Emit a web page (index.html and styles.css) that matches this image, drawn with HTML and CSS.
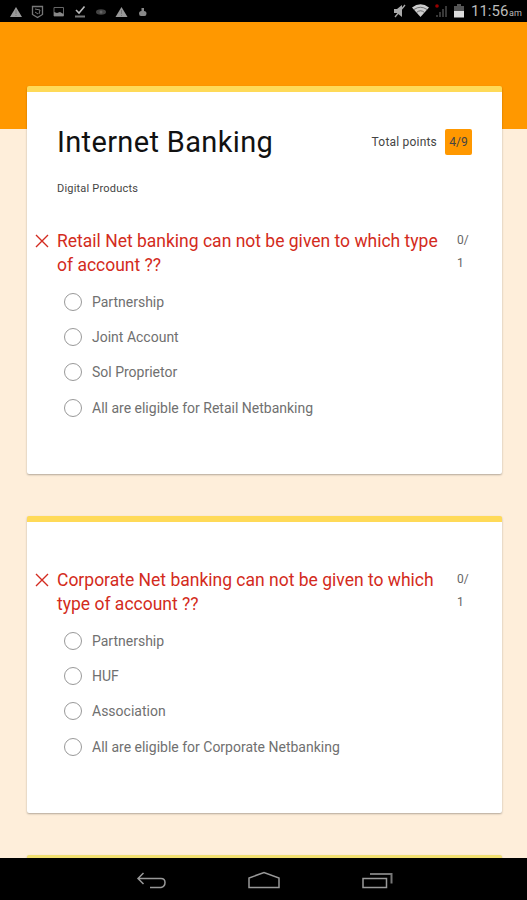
FILE: index.html
```html
<!DOCTYPE html>
<html lang="en">
<head>
    <meta charset="UTF-8">
    <meta name="viewport" content="width=device-width, initial-scale=1.0">
    <title>Internet Banking</title>
    <link rel="stylesheet" href="styles.css">
</head>
<body>
    <div class="status-bar">
        <svg class="status-icons" width="160" height="22" viewBox="0 0 160 22">
            <path d="M16 7L22 17H10z" fill="#999"/>
            <path d="M16 10v4M16 15v1" stroke="#777"/>
            <path d="M32.500 6.500h10v8l-5 3-5-3z" fill="none" stroke="#777" stroke-width="1.300"/>
            <path d="M35 9l5 1-1 4M35 12l3 2" fill="none" stroke="#777"/>
            <path d="M54 7.500h9.500v8.500H54z" fill="none" stroke="#666"/>
            <path d="M54 12l3 1 3-1 3.500 2v2H54z" fill="#888"/>
            <path d="M76 10l3 3 5.500-6.500" fill="none" stroke="#bbb" stroke-width="1.600"/>
            <path d="M75 16.500h10" stroke="#777" stroke-width="2"/>
            <ellipse cx="101" cy="12" rx="5" ry="2.700" fill="#444"/>
            <circle cx="101" cy="12" r="1.500" fill="#666"/>
            <path d="M121.500 7L127.500 17h-12z" fill="#999"/>
            <path d="M121.500 10v4M121.500 15v1" stroke="#777"/>
            <path d="M141.500 8h2.500v3q2.500 0 2.500 2.500T144.500 16h-3.500q-2 0-2-2.500T141.500 11z" fill="#888"/>
        </svg>
        <div class="status-right">
            <svg width="76" height="22" viewBox="0 0 76 22">
                <path d="M1 9h3l5-4v12l-5-4H1z" fill="#aaa"/>
                <path d="M2 17L12 5" stroke="#aaa" stroke-width="1.300"/>
                <path d="M19 7.500Q27.500 1 36 7.500L27.500 17z" fill="#ccc"/>
                <path d="M21 9.500Q27.500 5 34 9.500M23.500 12.500Q27.500 9 31.500 12.500" fill="none" stroke="#555" stroke-width=".8"/>
                <path d="M43 17h2v-2h-2zM46 17h2v-5h-2zM49 17h2V9h-2zM52 17h2V6h-2z" fill="#383838"/>
                <circle cx="44" cy="6" r="1.800" fill="#900"/>
                <path d="M64 4h4v2h3v6h-10V6h3z" fill="#555"/>
                <path d="M61 11h10v6.500H61z" fill="#ddd"/>
            </svg>
            <span class="clock">11:56</span>
            <span class="ampm">am</span>
        </div>
    </div>

    <div class="page">
        <div class="card card-first">
            <div class="form-header">
                <h1>Internet Banking</h1>
                <div class="total">
                    <span class="total-label">Total points</span>
                    <span class="score">4/9</span>
                </div>
            </div>
            <p class="description">Digital Products</p>
            <div class="question">
                <svg class="cross" width="14" height="14" viewBox="0 0 14 14"><path d="M1 1l12 12M13 1l-12 12"/></svg>
                <h2>Retail Net banking can not be given to which type<br>of account ??</h2>
                <div class="points">0/<br>1</div>
            </div>
            <ul class="options">
                <li><span class="radio"></span><span class="option-text">Partnership</span></li>
                <li><span class="radio"></span><span class="option-text">Joint Account</span></li>
                <li><span class="radio"></span><span class="option-text">Sol Proprietor</span></li>
                <li><span class="radio"></span><span class="option-text">All are eligible for Retail Netbanking</span></li>
            </ul>
        </div>

        <div class="card">
            <div class="question">
                <svg class="cross" width="14" height="14" viewBox="0 0 14 14"><path d="M1 1l12 12M13 1l-12 12"/></svg>
                <h2>Corporate Net banking can not be given to which<br>type of account ??</h2>
                <div class="points">0/<br>1</div>
            </div>
            <ul class="options">
                <li><span class="radio"></span><span class="option-text">Partnership</span></li>
                <li><span class="radio"></span><span class="option-text">HUF</span></li>
                <li><span class="radio"></span><span class="option-text">Association</span></li>
                <li><span class="radio"></span><span class="option-text">All are eligible for Corporate Netbanking</span></li>
            </ul>
        </div>

        <div class="card card-next"></div>
    </div>

    <div class="nav-bar">
        <svg width="30" height="20" viewBox="0 0 30 20">
            <path d="M7.500 3L2 8.500 7.500 14M2.500 8.500H25Q29 8.500 29 12.500T25 17.500H14" />
        </svg>
        <svg width="34" height="20" viewBox="0 0 34 20">
            <path d="M2 17.500V8L17 2.500 32 8V17.500z" />
        </svg>
        <svg width="32" height="20" viewBox="0 0 32 20">
            <path d="M2 8.500H25.500V17.500H2z" />
            <path d="M9 4H30.500V13.500" class="recent-back" />
        </svg>
    </div>
</body>
</html>
```
FILE: styles.css
```css
* {
    box-sizing: border-box;
}

body {
    margin: 0;
    height: 900px;
    display: flex;
    flex-direction: column;
    overflow: hidden;
    background-color: #000;
    font-family: Roboto, sans-serif;
}

.status-bar {
    display: flex;
    justify-content: space-between;
    flex: none;
    height: 22px;
    background-color: #000;
}

.status-right {
    display: flex;
    width: 134px;
    white-space: nowrap;
    color: #bbb;
}

.status-right svg {
    flex: none;
}

.clock {
    margin-left: 2px;
    width: 38px;
    font-size: 15px;
    line-height: 23px;
}

.ampm {
    font-size: 9px;
    line-height: 27px;
}

.page {
    flex: none;
    height: 836px;
    padding: 64px 25px 0 27px;
    overflow: hidden;
    background: linear-gradient(#ff9800 107px, #feeeda 107px);
}

.card {
    height: 297px;
    margin-bottom: 42px;
    padding-top: 46px;
    background-color: #fff;
    border-top: 6px solid #ffda58;
    border-radius: 2px;
    box-shadow: 0 1px 2px rgba(0, 0, 0, 0.3);
}

.card-first {
    height: 388px;
    padding-top: 30px;
}

.form-header {
    display: flex;
    justify-content: space-between;
    align-items: center;
    height: 40px;
    padding: 0 30px;
}

h1 {
    margin: 0;
    font-size: 29px;
    font-weight: 400;
    letter-spacing: 0.35px;
    white-space: nowrap;
    color: #111;
}

.total {
    display: flex;
    align-items: center;
    gap: 8px;
    font-size: 12px;
    color: #444;
}

.total-label {
    letter-spacing: 0.2px;
}

.score {
    width: 27px;
    line-height: 26px;
    text-align: center;
    background-color: #ff9800;
    border-radius: 2px;
}

.description {
    margin: 18px 30px 33px;
    font-size: 11px;
    line-height: 17px;
    height: 16px;
    letter-spacing: 0.2px;
    color: #444;
}

.question {
    display: flex;
    height: 55.5px;
    padding-left: 8px;
}

.cross {
    flex: none;
    margin-top: 5px;
    margin-right: 8px;
}

.cross path {
    fill: none;
    stroke: #d32b20;
    stroke-width: 1.4;
}

h2 {
    width: 400px;
    margin: 0;
    font-size: 17.5px;
    font-weight: 400;
    line-height: 24px;
    white-space: nowrap;
    color: #d32b20;
}

.points {
    font-size: 12px;
    line-height: 23px;
    color: #666;
}

.options {
    margin: 0;
    padding: 0 0 0 36.5px;
    list-style: none;
}

.options li {
    display: flex;
    align-items: center;
    height: 35.2px;
    font-size: 14px;
    color: #707070;
}

.radio {
    width: 18px;
    height: 18px;
    margin-right: 10.5px;
    border: 1.5px solid #999;
    border-radius: 50%;
}

.card-next {
    margin-bottom: 0;
    border-color: #f2e070;
}

.nav-bar {
    display: flex;
    justify-content: space-between;
    flex: none;
    height: 42px;
    padding: 12px 134px 0 136px;
}

.nav-bar path {
    fill: none;
    stroke: #999;
    stroke-width: 1.5;
}

.nav-bar .recent-back {
    stroke: #777;
    stroke-width: 2;
}
```
